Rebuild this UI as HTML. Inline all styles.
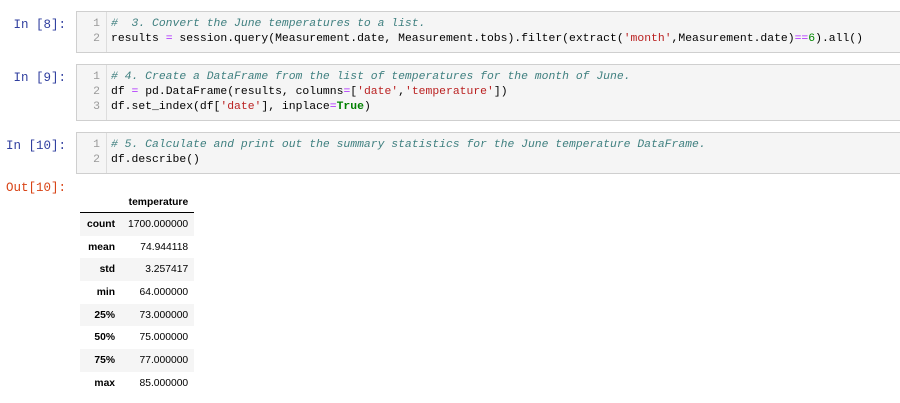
<!DOCTYPE html>
<html><head><style>
body{margin:0;background:#fff;width:900px;height:403px;overflow:hidden;position:relative;font-family:"Liberation Mono",monospace}
.p{position:absolute;font-size:12.5px;color:#303f9f;text-align:right;width:66px}
.o{color:#d84315}
.cell{position:absolute;left:76px;right:0;background:#f5f5f5;border:1px solid #cfcfcf;border-right:none}
.g{position:absolute;left:0;top:0;bottom:0;width:29px;border-right:1px solid #ddd}
.ln{position:absolute;left:0;width:23px;text-align:right;color:#999;font-size:11.4px}
.c{position:absolute;left:34px;font-size:11.4px;white-space:pre;color:#000}
.cm{color:#408080;font-style:italic}
.s{color:#ba2121}.op{color:#aa22ff}.k{color:#008000;font-weight:bold}.n{color:#080}
table{position:absolute;left:80px;top:192px;border-collapse:collapse;font-family:"Liberation Sans",sans-serif;font-size:10.3px;color:#000}
th,td{text-align:right;padding:0 6px 0 7px;height:22.7px}
thead th{border-bottom:1px solid #000;height:20px}
tbody tr:nth-child(odd){background:#f5f5f5}
tbody th{font-weight:bold}
</style></head><body>
<div class="p" style="top:18px">In [8]:</div>
<div class="cell" style="top:11px;height:40px"><div class="g"></div>
<div class="ln" style="top:6px">1</div><div class="ln" style="top:21px">2</div>
<div class="c" style="top:6px"><span class="cm">#  3. Convert the June temperatures to a list.</span></div>
<div class="c" style="top:21px">results <span class="op">=</span> session.query(Measurement.date, Measurement.tobs).filter(extract(<span class="s">'month'</span>,Measurement.date)<span class="op">==</span><span class="n">6</span>).all()</div></div>

<div class="p" style="top:71px">In [9]:</div>
<div class="cell" style="top:64px;height:55px"><div class="g"></div>
<div class="ln" style="top:6px">1</div><div class="ln" style="top:21px">2</div><div class="ln" style="top:36px">3</div>
<div class="c" style="top:6px"><span class="cm"># 4. Create a DataFrame from the list of temperatures for the month of June.</span></div>
<div class="c" style="top:21px">df <span class="op">=</span> pd.DataFrame(results, columns<span class="op">=</span>[<span class="s">'date'</span>,<span class="s">'temperature'</span>])</div>
<div class="c" style="top:36px">df.set_index(df[<span class="s">'date'</span>], inplace<span class="op">=</span><span class="k">True</span>)</div></div>

<div class="p" style="top:139px">In [10]:</div>
<div class="cell" style="top:132px;height:40px"><div class="g"></div>
<div class="ln" style="top:6px">1</div><div class="ln" style="top:21px">2</div>
<div class="c" style="top:6px"><span class="cm"># 5. Calculate and print out the summary statistics for the June temperature DataFrame.</span></div>
<div class="c" style="top:21px">df.describe()</div></div>

<div class="p o" style="top:181px">Out[10]:</div>
<table><thead><tr><th></th><th>temperature</th></tr></thead><tbody>
<tr><th>count</th><td>1700.000000</td></tr>
<tr><th>mean</th><td>74.944118</td></tr>
<tr><th>std</th><td>3.257417</td></tr>
<tr><th>min</th><td>64.000000</td></tr>
<tr><th>25%</th><td>73.000000</td></tr>
<tr><th>50%</th><td>75.000000</td></tr>
<tr><th>75%</th><td>77.000000</td></tr>
<tr><th>max</th><td>85.000000</td></tr>
</tbody></table>
</body></html>
